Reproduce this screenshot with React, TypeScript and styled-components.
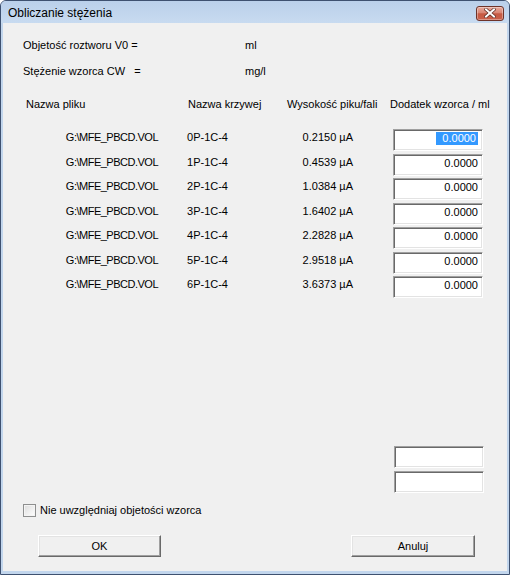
import React from 'react';
import styled, { createGlobalStyle } from 'styled-components';

const GlobalStyle = createGlobalStyle`
  html, body {
    margin: 0;
    padding: 0;
    background: #ffffff;
  }
  * {
    box-sizing: border-box;
  }
`;

const Window = styled.div`
  width: 510px;
  height: 575px;
  display: flex;
  flex-direction: column;
  border: 1px solid #3e5170;
  border-radius: 6px 6px 0 0;
  background: #c2d6ed;
  overflow: hidden;
  font-family: 'Liberation Sans', Arial, sans-serif;
  font-size: 11px;
  color: #000;
`;

const TitleBar = styled.div`
  height: 22px;
  flex-shrink: 0;
  display: flex;
  align-items: center;
  justify-content: space-between;
  padding: 0 5px 0 7px;
  background: linear-gradient(#bad0ea, #c8dbf0);
`;

const Title = styled.div`
  font-size: 12px;
  color: #000;
  margin-top: 1px;
`;

const CloseButton = styled.div`
  width: 28px;
  height: 15px;
  margin-top: 2px;
  display: flex;
  align-items: center;
  justify-content: center;
  border: 1px solid #6e3329;
  border-radius: 3px;
  background: linear-gradient(#e8aa9c 0%, #d98573 45%, #c65a43 52%, #c9604a 100%);
  box-shadow: inset 0 0 0 1px rgba(255, 255, 255, 0.35);
`;

const Frame = styled.div`
  flex: 1;
  display: flex;
  padding: 0 2px 3px 2px;
`;

const Client = styled.div`
  flex: 1;
  display: flex;
  flex-direction: column;
  background: #f0f0f0;
  padding: 9px 23px 14px 20px;
`;

const InfoRow = styled.div`
  display: grid;
  grid-template-columns: 222px auto;
  height: 26px;
  line-height: 26px;
  white-space: pre;
`;

const columns = `
  display: grid;
  grid-template-columns: 160px 100px 106px 94px;
`;

const HeaderRow = styled.div`
  ${columns}
  height: 20px;
  line-height: 20px;
  margin-top: 10px;
  margin-bottom: 14px;
  white-space: nowrap;
`;

const HeaderCell = styled.div<{ $pl: number }>`
  padding-left: ${(p) => p.$pl}px;
`;

const DataRow = styled.div`
  ${columns}
  height: 24.5px;
`;

const Cell = styled.div<{ $pr: number; $tight?: boolean }>`
  text-align: right;
  padding-top: 3px;
  padding-right: ${(p) => p.$pr}px;
  line-height: 13px;
  white-space: nowrap;
  letter-spacing: ${(p) => (p.$tight ? '-0.5px' : 'normal')};
`;

const Edit = styled.div`
  width: 90px;
  height: 22px;
  background: #fff;
  border: 1px solid;
  border-color: #a0a0a0 #ffffff #ffffff #a0a0a0;
  box-shadow: inset 1px 1px 0 #696969, inset -1px -1px 0 #e3e3e3;
  text-align: right;
  padding: 2px 4px 0 0;
  line-height: 13px;
`;

const EditCell = styled.div`
  padding-left: 4px;
  padding-top: 1px;
`;

const Selected = styled.span`
  display: inline-block;
  background: #3399ff;
  color: #fff;
  padding: 0 2px 0 6px;
`;

const BoxGroup = styled.div`
  margin-top: auto;
  align-self: flex-end;
  display: flex;
  flex-direction: column;
  gap: 3px;
`;

const CheckRow = styled.div`
  margin-top: 10px;
  height: 14px;
  display: flex;
  align-items: center;
  gap: 4px;
  line-height: 14px;
`;

const CheckBox = styled.div`
  width: 13px;
  height: 13px;
  border: 1px solid #8e8f8f;
  background: linear-gradient(135deg, #dcdcdc, #ffffff);
  box-shadow: inset 0 0 0 1px #f4f4f4;
`;

const ButtonRow = styled.div`
  margin-top: 18px;
  display: flex;
  justify-content: space-between;
  padding: 0 9px 0 15px;
`;

const Button = styled.div<{ $w: number }>`
  width: ${(p) => p.$w}px;
  height: 22px;
  display: flex;
  align-items: center;
  justify-content: center;
  background: #f0f0f0;
  border: 1px solid;
  border-color: #ffffff #696969 #696969 #ffffff;
  box-shadow: inset -1px -1px 0 #a0a0a0, inset 1px 1px 0 #e3e3e3;
`;

const rows = [
  { curve: '0P-1C-4', height: '0.2150 µA' },
  { curve: '1P-1C-4', height: '0.4539 µA' },
  { curve: '2P-1C-4', height: '1.0384 µA' },
  { curve: '3P-1C-4', height: '1.6402 µA' },
  { curve: '4P-1C-4', height: '2.2828 µA' },
  { curve: '5P-1C-4', height: '2.9518 µA' },
  { curve: '6P-1C-4', height: '3.6373 µA' },
];

const CloseIcon = () => (
  <svg width="12" height="10" viewBox="0 0 12 10">
    <path d="M2 1.5 L10 8.5 M10 1.5 L2 8.5" stroke="#5a2a22" strokeWidth="3.4" strokeLinecap="square" />
    <path d="M2 1.5 L10 8.5 M10 1.5 L2 8.5" stroke="#ffffff" strokeWidth="2" strokeLinecap="square" />
  </svg>
);

export default function App() {
  return (
    <>
      <GlobalStyle />
      <Window>
        <TitleBar>
          <Title>Obliczanie stężenia</Title>
          <CloseButton>
            <CloseIcon />
          </CloseButton>
        </TitleBar>
        <Frame>
          <Client>
            <InfoRow>
              <div>Objetość roztworu V0 =</div>
              <div>ml</div>
            </InfoRow>
            <InfoRow>
              <div>Stężenie wzorca CW   =</div>
              <div>mg/l</div>
            </InfoRow>

            <HeaderRow>
              <HeaderCell $pl={3}>Nazwa pliku</HeaderCell>
              <HeaderCell $pl={5}>Nazwa krzywej</HeaderCell>
              <HeaderCell $pl={4}>Wysokość piku/fali</HeaderCell>
              <HeaderCell $pl={1}>Dodatek wzorca / ml</HeaderCell>
            </HeaderRow>

            {rows.map((r, i) => (
              <DataRow key={r.curve}>
                <Cell $pr={25} $tight>G:\MFE_PBCD.VOL</Cell>
                <Cell $pr={55}>{r.curve}</Cell>
                <Cell $pr={36}>{r.height}</Cell>
                <EditCell>
                  <Edit>{i === 0 ? <Selected>0.0000</Selected> : '0.0000'}</Edit>
                </EditCell>
              </DataRow>
            ))}

            <BoxGroup>
              <Edit />
              <Edit />
            </BoxGroup>

            <CheckRow>
              <CheckBox />
              <span>Nie uwzględniaj objetości wzorca</span>
            </CheckRow>

            <ButtonRow>
              <Button $w={123}>OK</Button>
              <Button $w={124}>Anuluj</Button>
            </ButtonRow>
          </Client>
        </Frame>
      </Window>
    </>
  );
}
